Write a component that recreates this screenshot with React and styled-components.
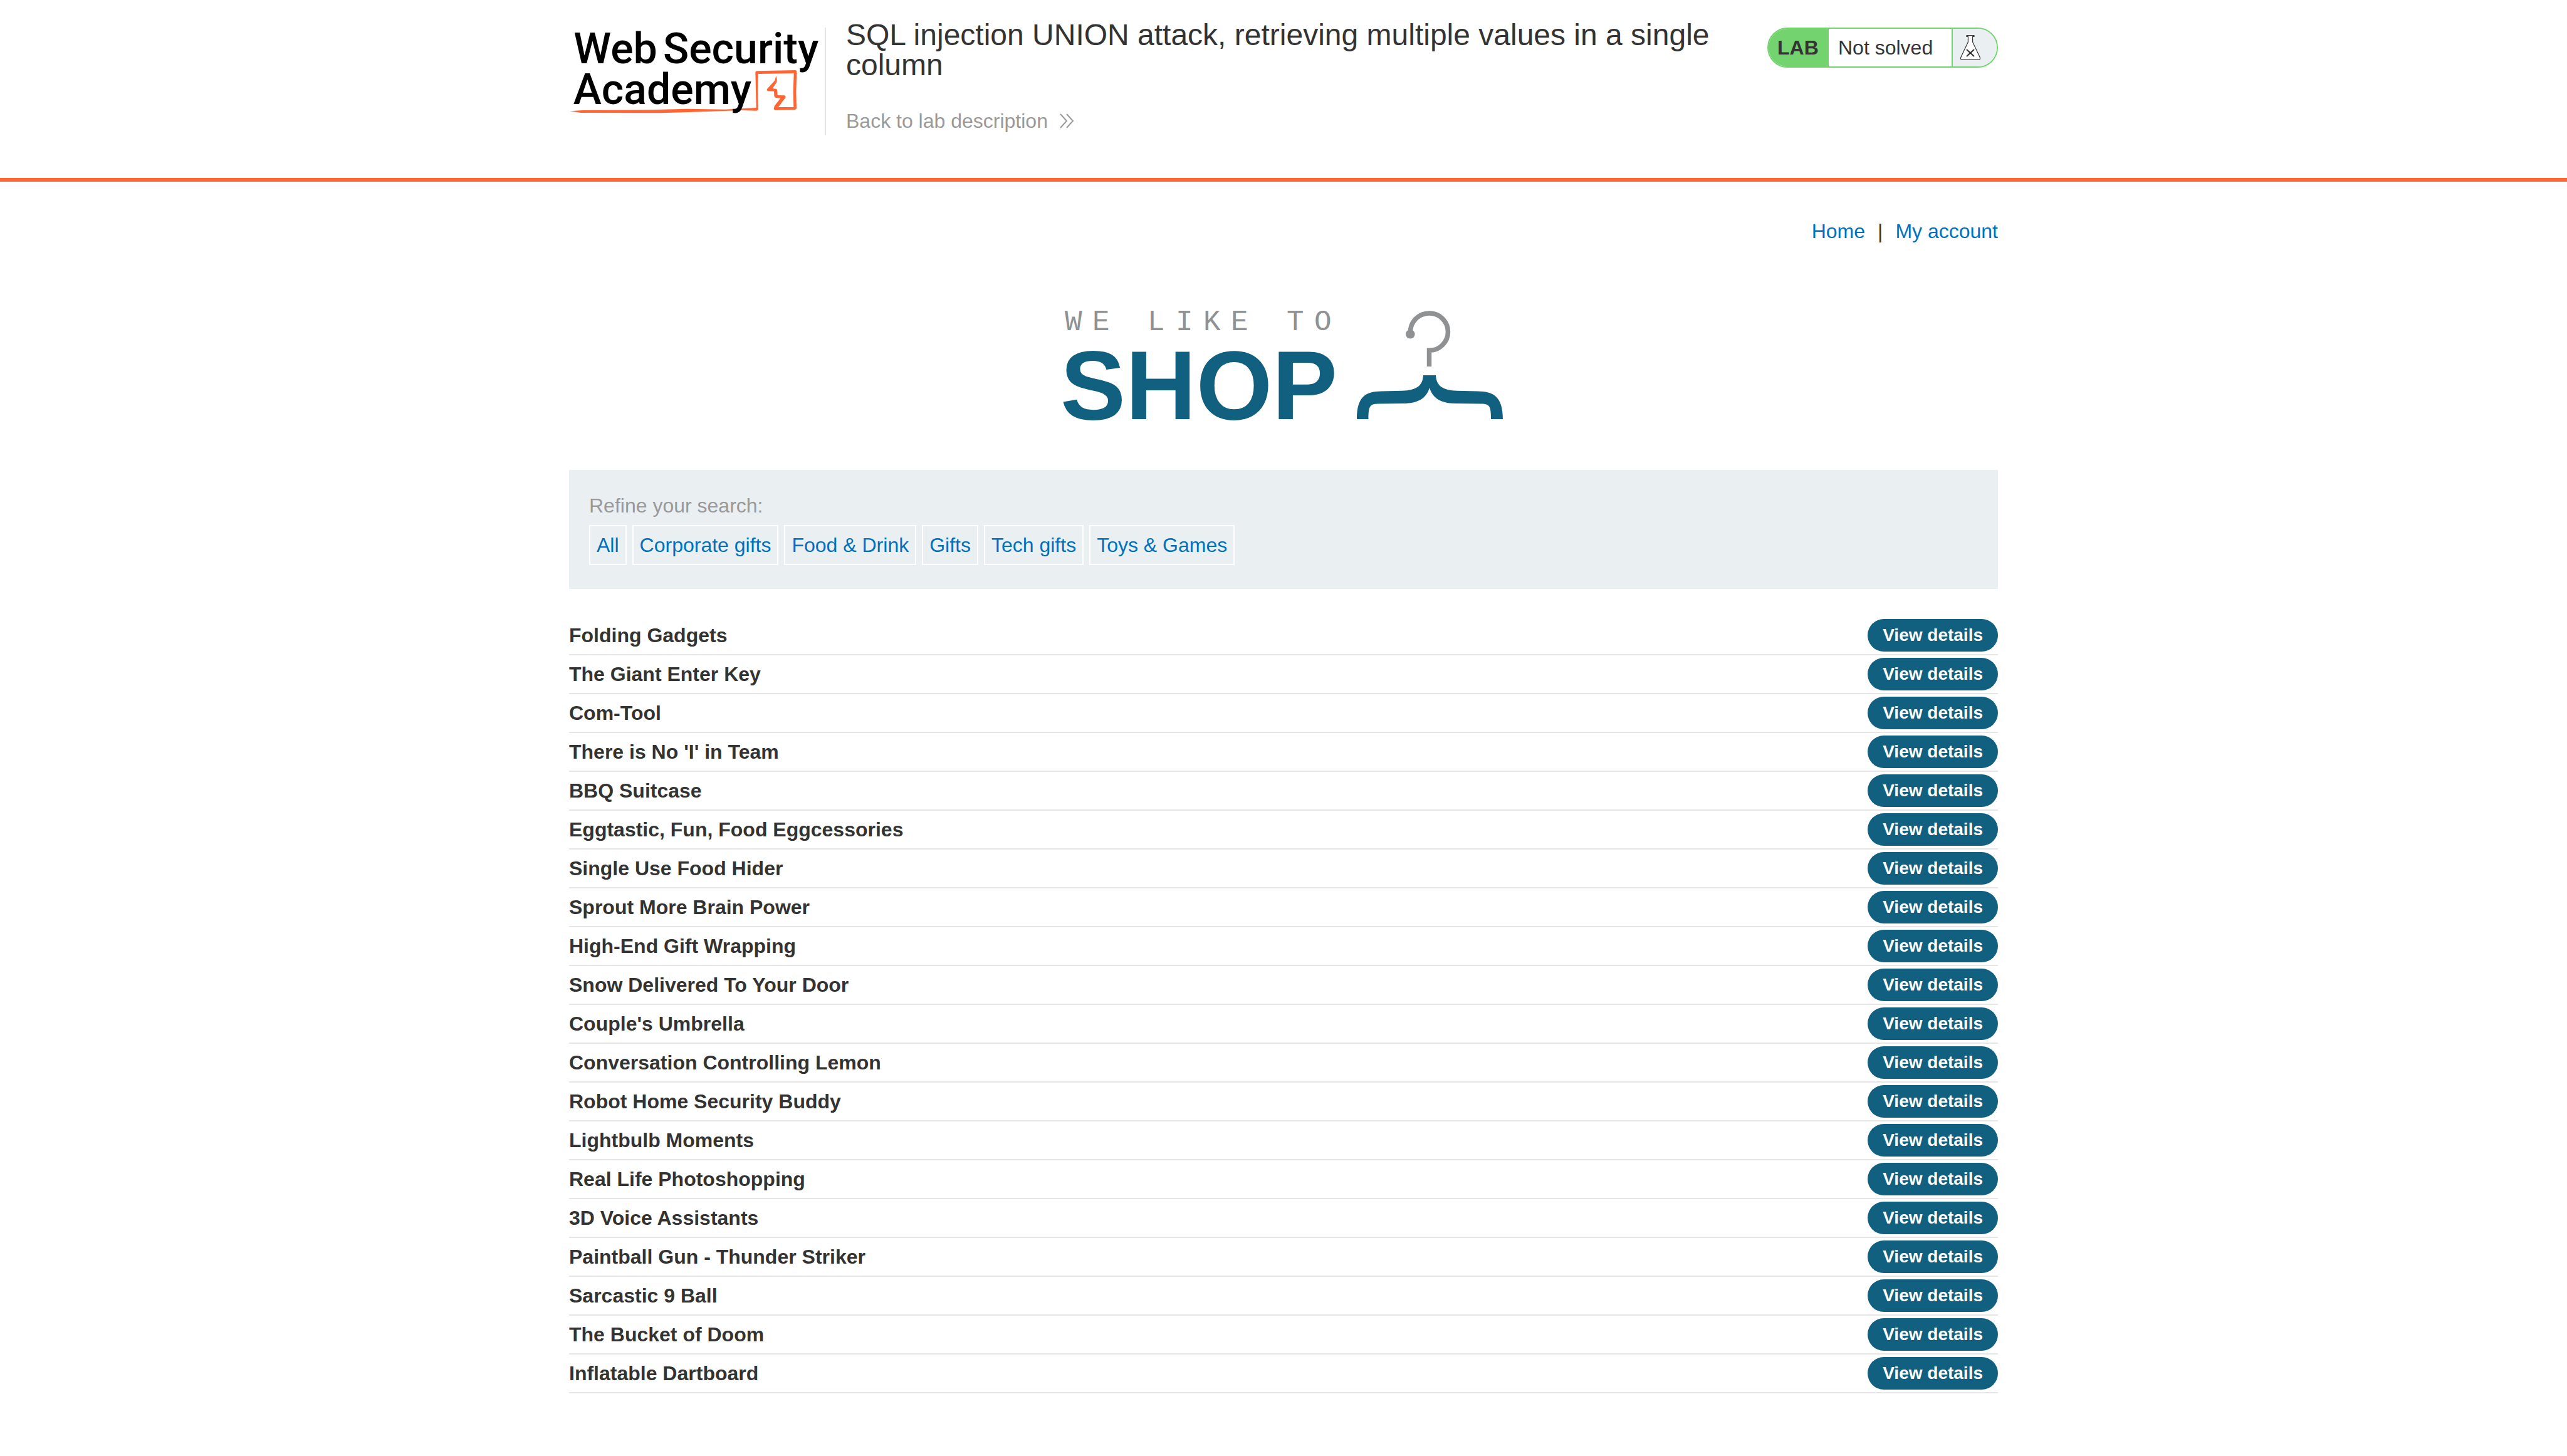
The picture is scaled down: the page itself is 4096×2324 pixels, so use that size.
import React from "react";
import styled, { createGlobalStyle } from "styled-components";

const color = {
  text: "#333332",
  muted: "#999999",
  link: "#0071bc",
  accent: "#ff6633",
  panel: "#eaeff2",
  rule: "#e6e6e6",
  brand: "#126080",
  green: "#72d36f",
};

const GlobalStyle = createGlobalStyle`
  *, *::before, *::after { box-sizing: border-box; }
  body {
    margin: 0;
    background: #ffffff;
    color: ${color.text};
    font-family: "Liberation Sans", Arial, sans-serif;
    font-size: 32px;
    line-height: 36px;
  }
  a { text-decoration: none; }
`;

const Container = styled.div`
  width: 100%;
  max-width: 2280px;
  margin: 0 auto;
`;

const Header = styled.header`
  border-bottom: 6px solid ${color.accent};
`;

const HeaderRow = styled(Container)`
  display: flex;
  align-items: flex-start;
  padding: 32px 0 68px;
`;

const LogoLink = styled.a`
  flex: none;
  height: 172px;
  margin-top: 12px;
  padding-right: 8px;
  border-right: 2px solid ${color.rule};
`;

const AcademyArt = styled.svg`
  display: block;
  width: 400px;
  height: 140px;
  overflow: visible;
`;

const AcademyText = styled.text`
  font-family: Roboto, "Liberation Sans", sans-serif;
  font-size: 204px;
  font-weight: 500;
  fill: #000000;
`;

const TitleBlock = styled.div`
  flex: 1;
  min-width: 0;
  padding: 0 64px 0 32px;
`;

const Title = styled.h1`
  margin: 0 0 47px;
  font-size: 48px;
  font-weight: 400;
  line-height: 48px;
`;

const BackLink = styled.a`
  display: inline-flex;
  align-items: center;
  gap: 18px;
  color: ${color.muted};
`;

const Chevrons = styled.svg`
  width: 24px;
  height: 24px;
  fill: none;
  stroke: ${color.muted};
  stroke-width: 2;
`;

const Badge = styled.div`
  flex: none;
  display: flex;
  height: 64px;
  margin-top: 12px;
  border: 2px solid ${color.green};
  border-radius: 32px;
  overflow: hidden;
  line-height: 60px;
`;

const BadgeLabel = styled.strong`
  width: 96px;
  padding-left: 14px;
  background: ${color.green};
`;

const BadgeStatus = styled.span`
  width: 196px;
  padding-left: 15px;
`;

const BadgeIcon = styled.span`
  display: flex;
  align-items: center;
  width: 72px;
  padding-left: 11px;
  border-left: 2px solid ${color.green};
  background: ${color.panel};
`;

const Nav = styled.nav`
  display: flex;
  justify-content: flex-end;
  gap: 20px;
  padding-top: 61px;
`;

const NavLink = styled.a`
  color: ${color.link};
`;

const ShopBanner = styled.section`
  display: flex;
  justify-content: center;
  padding: 109px 0 78px;
`;

const ShopArt = styled.svg`
  display: block;
  width: 700px;
  height: 176px;
  overflow: visible;
`;

const Tagline = styled.text`
  font-family: "Liberation Mono", "Courier New", monospace;
  font-size: 46px;
  fill: #8f9192;
`;

const Wordmark = styled.text`
  font-family: "Liberation Sans", Arial, sans-serif;
  font-size: 156px;
  font-weight: 700;
  fill: ${color.brand};
`;

const Filters = styled.section`
  padding: 38px 32px;
  background: ${color.panel};
`;

const FilterLabel = styled.p`
  margin: 0 0 11px;
  color: ${color.muted};
  line-height: 39px;
`;

const FilterList = styled.div`
  display: flex;
  flex-wrap: wrap;
  gap: 9px;
`;

const FilterLink = styled.a`
  padding: 0 10px;
  border: 2px solid #ffffff;
  color: ${color.link};
  line-height: 60px;
`;

const ProductList = styled.ul`
  margin: 44px 0 100px;
  padding: 0;
  list-style: none;
`;

const ProductRow = styled.li`
  display: flex;
  align-items: center;
  justify-content: space-between;
  padding: 4px 0;
  border-bottom: 2px solid ${color.rule};
  font-weight: 700;
`;

const DetailsLink = styled.a`
  padding: 0 24px;
  border-radius: 26px;
  background: ${color.brand};
  color: #ffffff;
  font-size: 28px;
  line-height: 52px;
`;

const categories = ["All", "Corporate gifts", "Food & Drink", "Gifts", "Tech gifts", "Toys & Games"];

const products = [
  "Folding Gadgets",
  "The Giant Enter Key",
  "Com-Tool",
  "There is No 'I' in Team",
  "BBQ Suitcase",
  "Eggtastic, Fun, Food Eggcessories",
  "Single Use Food Hider",
  "Sprout More Brain Power",
  "High-End Gift Wrapping",
  "Snow Delivered To Your Door",
  "Couple's Umbrella",
  "Conversation Controlling Lemon",
  "Robot Home Security Buddy",
  "Lightbulb Moments",
  "Real Life Photoshopping",
  "3D Voice Assistants",
  "Paintball Gun - Thunder Striker",
  "Sarcastic 9 Ball",
  "The Bucket of Doom",
  "Inflatable Dartboard",
];

function AcademyLogo() {
  return (
    <AcademyArt viewBox="54 72 1200 420">
      <path
        fill={color.accent}
        d="M58 472 L120 468 L450 466 L620 461 L800 464 L950 456 L946 288 Q946 281 953 280 L1138 276 Q1145 278 1144 286 L1141 380 L1143 458 Q1142 465 1134 465 L1042 468 Q1034 467 1034 459 L1038 446 L1066 411 L1044 408 Q1036 406 1036 398 L1035 377 L1006 376 Q999 373 1002 366 L1030 335 Q1040 328 1041 318 L1045 304 L1049 318 Q1050 330 1046 337 L1028 364 L1044 365 Q1051 367 1051 374 L1052 396 L1086 397 Q1094 402 1089 409 L1056 453 L1129 453 L1127 380 L1130 291 L959 294 L957 380 L960 463 Q959 470 950 470 L880 468 L700 475 L500 481 L110 480 Z"
      />
      <AcademyText x="76" y="243">Web</AcademyText>
      <AcademyText x="504" y="243">Security</AcademyText>
      <AcademyText x="74" y="438">Academy</AcademyText>
    </AcademyArt>
  );
}

function Flask() {
  return (
    <svg width="34" height="42" viewBox="0 0 34 42" fill="none" stroke={color.text} strokeLinejoin="round">
      <path
        fill="#ffffff"
        strokeWidth="1.2"
        d="M11 1.6 H23 V3.4 H20.6 V12 L32.2 36.5 Q33.4 40.4 30 40.4 H4 Q0.6 40.4 1.8 36.5 L13.4 12 V3.4 H11 Z"
      />
      <path strokeWidth="2.2" d="M11 24 L23 35 M23 24 L11 35" />
    </svg>
  );
}

function ShopLogo() {
  return (
    <ShopArt viewBox="18 26 700 176">
      <Tagline x="19 63 107 151 196 240 284 328 373 417" y="57">WE LIKE TO</Tagline>
      <Wordmark x="12" y="199">SHOP</Wordmark>
      <circle cx="570.3" cy="63.3" r="7.3" fill="#8f9192" />
      <path d="M570.5 60 A30 29.7 0 1 1 600.5 89.3 V115" fill="none" stroke="#8f9192" strokeWidth="7.5" />
      <path
        fill={color.brand}
        d="M591 129 H611 C612 146 622 153 645 153.7 L678 154.5 C702 155 718 162 718 199 H699 C699 178 697 175 684 174.5 L643 174 C620 174 606 166 601 149 C596 166 582 174 559 174 L518 174.5 C506 175 503.5 178 503.5 199 H485 C485 162 500 155 524 154.5 L557 153.7 C580 153 590 146 591 129 Z"
      />
    </ShopArt>
  );
}

export default function App() {
  return (
    <>
      <GlobalStyle />
      <Header>
        <HeaderRow>
          <LogoLink href="#" aria-label="Web Security Academy">
            <AcademyLogo />
          </LogoLink>
          <TitleBlock>
            <Title>SQL injection UNION attack, retrieving multiple values in a single column</Title>
            <BackLink href="#">
              Back to lab description
              <Chevrons viewBox="0 0 24 24">
                <path d="M2 1 L12 12 L2 23 M12 1 L22 12 L12 23" />
              </Chevrons>
            </BackLink>
          </TitleBlock>
          <Badge>
            <BadgeLabel>LAB</BadgeLabel>
            <BadgeStatus>Not solved</BadgeStatus>
            <BadgeIcon>
              <Flask />
            </BadgeIcon>
          </Badge>
        </HeaderRow>
      </Header>
      <Container as="main">
        <Nav>
          <NavLink href="#">Home</NavLink>
          <span>|</span>
          <NavLink href="#">My account</NavLink>
        </Nav>
        <ShopBanner>
          <ShopLogo />
        </ShopBanner>
        <Filters>
          <FilterLabel>Refine your search:</FilterLabel>
          <FilterList>
            {categories.map((name) => (
              <FilterLink key={name} href="#">{name}</FilterLink>
            ))}
          </FilterList>
        </Filters>
        <ProductList>
          {products.map((name) => (
            <ProductRow key={name}>
              {name}
              <DetailsLink href="#">View details</DetailsLink>
            </ProductRow>
          ))}
        </ProductList>
      </Container>
    </>
  );
}
